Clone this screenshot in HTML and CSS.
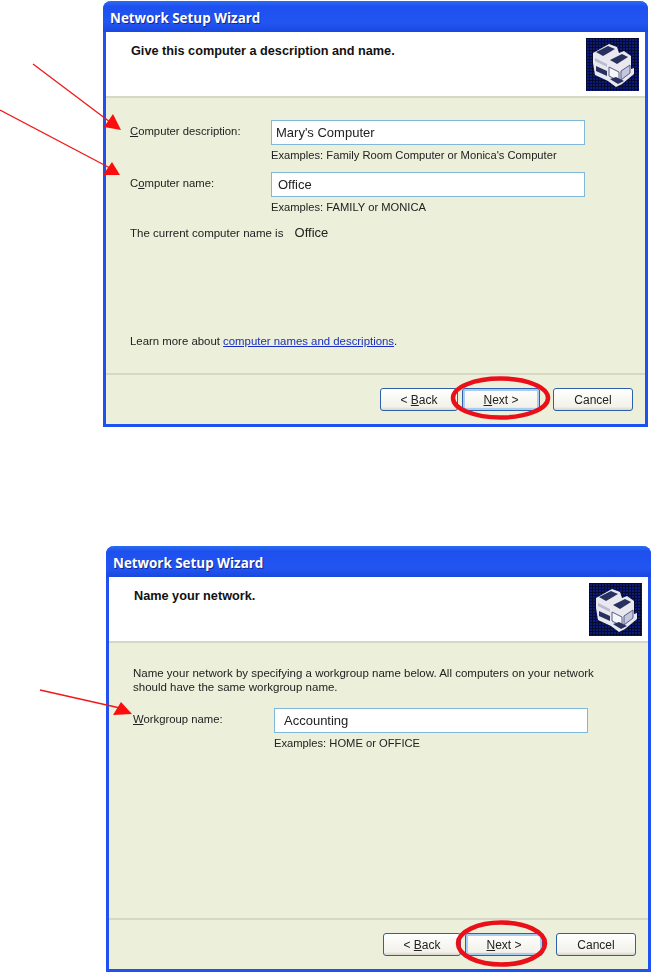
FILE: index.html
```html
<!DOCTYPE html>
<html lang="en">
<head>
  <meta charset="UTF-8">
  <title>Network Setup Wizard</title>
  <link rel="stylesheet" href="styles.css">
</head>
<body>
  <svg width="0" height="0" class="defs">
    <defs>
      <pattern id="hatch" width="3" height="3" patternUnits="userSpaceOnUse">
        <rect width="3" height="3" fill="#0c1a78"/>
        <rect width="1" height="3" fill="#050a30"/>
        <rect width="3" height="1" fill="#050a30"/>
      </pattern>
      <symbol id="netIcon" viewBox="0 0 53 53">
        <rect width="53" height="53" fill="url(#hatch)"/>
        <path d="M7 15 L23 6 L31 9 L33 15 L38 13 L45 18 L45 31 L48 30 L48 36 L36 46 L30 49 L22 43 L9 37 L7 25 Z" fill="#e8e8ee"/>
        <path d="M10 14 L22 8 L29 11 L17 18 Z" fill="#27305f"/>
        <path d="M24 22 L36 16 L42 19 L31 26 Z" fill="#27305f"/>
        <path d="M9 20 L21 26 L21 29 L9 23 Z" fill="#b9bdd2"/>
        <path d="M10 28 L21 33 L21 38 L10 33 Z" fill="#27305f"/>
        <path d="M23 29 L33 34 L33 43 L23 38 Z" fill="#f7f7fb" stroke="#565c86" stroke-width="1"/>
        <path d="M35 33 L44 27 L44 35 L35 42 Z" fill="#c5c8da" stroke="#565c86" stroke-width="1"/>
        <path d="M24 41 L32 46 L38 43 L30 39 Z" fill="#27305f"/>
      </symbol>
    </defs>
  </svg>

  <div class="window window-first">
    <div class="titlebar">Network Setup Wizard</div>
    <div class="head">
      <h2>Give this computer a description and name.</h2>
      <svg class="head-icon"><use href="#netIcon"/></svg>
    </div>
    <div class="content">
      <div class="row">
        <label><u>C</u>omputer description:</label>
        <div>
          <input class="field" type="text" value="Mary's Computer">
          <p class="hint">Examples: Family Room Computer or Monica's Computer</p>
        </div>
      </div>
      <div class="row">
        <label>C<u>o</u>mputer name:</label>
        <div>
          <input class="field field-office" type="text" value="Office">
          <p class="hint">Examples: FAMILY or MONICA</p>
        </div>
      </div>
      <p class="current">The current computer name is <span class="current-name">Office</span></p>
      <p class="learn">Learn more about <a href="#">computer names and descriptions</a>.</p>
    </div>
    <div class="footer">
      <button class="btn btn-back">&lt; <u>B</u>ack</button>
      <button class="btn btn-next"><u>N</u>ext &gt;</button>
      <button class="btn btn-cancel">Cancel</button>
    </div>
  </div>

  <div class="window window-second">
    <div class="titlebar">Network Setup Wizard</div>
    <div class="head">
      <h2>Name your network.</h2>
      <svg class="head-icon"><use href="#netIcon"/></svg>
    </div>
    <div class="content">
      <p class="intro">Name your network by specifying a workgroup name below. All computers on your network should have the same workgroup name.</p>
      <div class="row">
        <label><u>W</u>orkgroup name:</label>
        <div>
          <input class="field field-group" type="text" value="Accounting">
          <p class="hint">Examples: HOME or OFFICE</p>
        </div>
      </div>
    </div>
    <div class="footer">
      <button class="btn btn-back">&lt; <u>B</u>ack</button>
      <button class="btn btn-next"><u>N</u>ext &gt;</button>
      <button class="btn btn-cancel">Cancel</button>
    </div>
  </div>

  <!-- red callouts drawn on top of the screenshots -->
  <svg class="marks" viewBox="0 0 652 974">
    <g class="arrow">
      <line x1="33" y1="64" x2="110" y2="122"/>
      <polygon points="113,114 104,127 121,130"/>
      <line x1="0" y1="110" x2="110" y2="168"/>
      <polygon points="112,162 103,175 120,175"/>
      <line x1="40" y1="690" x2="120" y2="708"/>
      <polygon points="121,702 113,715 132,714"/>
    </g>
    <ellipse cx="500.5" cy="398" rx="47.5" ry="19.5"/>
    <ellipse cx="501.5" cy="943.5" rx="43.5" ry="21"/>
  </svg>
</body>
</html>
```

FILE: styles.css
```css
body {
  margin: 0;
  position: relative;
  height: 974px;
  overflow: hidden;
  background: white;
  font-family: "Liberation Sans", Arial, sans-serif;
  font-size: 11.3px;
  color: #222;
}
.defs {
  position: absolute;
}
.window {
  width: 545px;
  height: 426px;
  box-sizing: border-box;
  display: flex;
  flex-direction: column;
  background: #ecefd9;
  border: 3px solid #1f50f0;
  border-top: none;
  border-radius: 8px 8px 0 0;
  filter: blur(0.4px);
}
.window-first {
  margin: 1px 0 0 103px;
}
.window-second {
  margin: 119px 0 0 106px;
}
.titlebar {
  height: 31px;
  flex: none;
  margin: 0 -3px;
  padding: 2px 0 0 7px;
  box-sizing: border-box;
  display: flex;
  align-items: center;
  border-radius: 8px 8px 0 0;
  background: linear-gradient(#2a6cf0 0%, #1d50ee 18%, #2255f2 70%, #1a48e0 100%);
  color: white;
  font-family: "Open Sans", sans-serif;
  font-size: 13.4px;
  font-weight: 700;
  text-shadow: 1px 1px 0 #0f2a90;
}
.head {
  height: 66px;
  flex: none;
  box-sizing: border-box;
  display: flex;
  justify-content: space-between;
  padding: 6px 6px 0 25px;
  background: white;
  border-bottom: 2px solid #d6d8c6;
}
.head h2 {
  margin: 6px 0 0;
  font-size: 12.7px;
  font-weight: 700;
  color: #111;
}
.head-icon {
  width: 53px;
  height: 53px;
}
.content {
  flex: 1;
  display: flex;
  flex-direction: column;
  padding: 22px 24px 25px;
}
.row {
  display: grid;
  grid-template-columns: 141px 314px;
  margin-bottom: 10px;
}
.row label {
  padding-top: 4px;
  line-height: 14px;
}
.field {
  display: block;
  width: 100%;
  height: 25px;
  box-sizing: border-box;
  padding: 0 4px;
  border: 1px solid #7fb8d8;
  background: white;
  font-family: inherit;
  font-size: 13px;
  color: #222;
}
.field-office {
  padding-left: 6px;
}
.field-group {
  padding-left: 9px;
}
.hint {
  margin: 3px 0 0;
  font-size: 11.2px;
  line-height: 14px;
}
.current {
  margin: 2px 0 0;
  font-size: 11.5px;
  line-height: 14px;
}
.current-name {
  margin-left: 8px;
  font-size: 13px;
}
.learn {
  margin: auto 0 0;
  font-size: 11.4px;
  line-height: 14px;
}
.learn a {
  color: #1a2fc0;
}
.intro {
  margin: 1px 0 14px;
  font-size: 11.5px;
  line-height: 14px;
}
.footer {
  height: 51px;
  flex: none;
  box-sizing: border-box;
  display: flex;
  padding-top: 13px;
  border-top: 2px solid #d6d8c6;
}
.btn {
  width: 78px;
  height: 23px;
  padding: 0;
  border: 1px solid #2f5fa8;
  border-radius: 3px;
  background: linear-gradient(#ffffff, #f2f1ea 85%, #d8d6c8);
  font-family: inherit;
  font-size: 12px;
  color: #222;
}
.btn-back {
  margin-left: 274px;
}
.btn-next {
  margin-left: 4px;
  box-shadow: inset 0 0 0 2px #a9cdf2;
}
.btn-cancel {
  margin-left: 13px;
  width: 80px;
}
.marks {
  position: absolute;
  left: 0;
  top: 0;
  width: 652px;
  height: 974px;
}
.marks .arrow line {
  stroke: #f01818;
  stroke-width: 1.3;
}
.marks .arrow polygon {
  fill: #fb0d0d;
}
.marks ellipse {
  fill: none;
  stroke: #ea0f18;
  stroke-width: 4.5;
}
```
